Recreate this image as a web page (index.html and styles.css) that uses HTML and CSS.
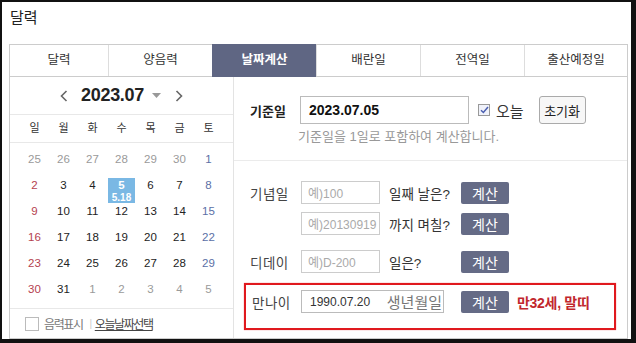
FILE: index.html
```html
<!DOCTYPE html>
<html>
  <head>
    <meta charset="utf-8">
    <title>달력</title>
    <link rel="stylesheet" href="styles.css">
  </head>
  <body>
    <div class="frame">
      <h2 class="title">달력</h2>
      <ul class="tabs">
        <li class="tab">달력</li>
        <li class="tab">양음력</li>
        <li class="tab active">날짜계산</li>
        <li class="tab">배란일</li>
        <li class="tab">전역일</li>
        <li class="tab">출산예정일</li>
      </ul>
      <div class="content">
        <!-- left: month calendar -->
        <div class="cal">
          <div class="cal-head">
            <svg class="arrow" width="8" height="12" viewBox="0 0 8 12"><path d="M6.5 1 L1.5 6 L6.5 11" fill="none" stroke="#666" stroke-width="1.6"/></svg>
            <span class="cal-month">2023.07</span>
            <svg class="caret" width="9" height="5" viewBox="0 0 9 5"><path d="M0 0 H9 L4.5 5 Z" fill="#999"/></svg>
            <svg class="arrow" width="8" height="12" viewBox="0 0 8 12"><path d="M1.5 1 L6.5 6 L1.5 11" fill="none" stroke="#666" stroke-width="1.6"/></svg>
          </div>
          <div class="cal-week">
            <span>일</span><span>월</span><span>화</span><span>수</span><span>목</span><span>금</span><span>토</span>
          </div>
          <div class="cal-grid">
            <div class="day other"><span class="num">25</span></div>
            <div class="day other"><span class="num">26</span></div>
            <div class="day other"><span class="num">27</span></div>
            <div class="day other"><span class="num">28</span></div>
            <div class="day other"><span class="num">29</span></div>
            <div class="day other"><span class="num">30</span></div>
            <div class="day sat"><span class="num">1</span></div>

            <div class="day sun"><span class="num">2</span></div>
            <div class="day"><span class="num">3</span></div>
            <div class="day"><span class="num">4</span></div>
            <div class="day today"><span class="num">5</span><span class="lunar">5.18</span></div>
            <div class="day"><span class="num">6</span></div>
            <div class="day"><span class="num">7</span></div>
            <div class="day sat"><span class="num">8</span></div>

            <div class="day sun"><span class="num">9</span></div>
            <div class="day"><span class="num">10</span></div>
            <div class="day"><span class="num">11</span></div>
            <div class="day"><span class="num">12</span></div>
            <div class="day"><span class="num">13</span></div>
            <div class="day"><span class="num">14</span></div>
            <div class="day sat"><span class="num">15</span></div>

            <div class="day sun"><span class="num">16</span></div>
            <div class="day"><span class="num">17</span></div>
            <div class="day"><span class="num">18</span></div>
            <div class="day"><span class="num">19</span></div>
            <div class="day"><span class="num">20</span></div>
            <div class="day"><span class="num">21</span></div>
            <div class="day sat"><span class="num">22</span></div>

            <div class="day sun"><span class="num">23</span></div>
            <div class="day"><span class="num">24</span></div>
            <div class="day"><span class="num">25</span></div>
            <div class="day"><span class="num">26</span></div>
            <div class="day"><span class="num">27</span></div>
            <div class="day"><span class="num">28</span></div>
            <div class="day sat"><span class="num">29</span></div>

            <div class="day sun"><span class="num">30</span></div>
            <div class="day"><span class="num">31</span></div>
            <div class="day other"><span class="num">1</span></div>
            <div class="day other"><span class="num">2</span></div>
            <div class="day other"><span class="num">3</span></div>
            <div class="day other"><span class="num">4</span></div>
            <div class="day other"><span class="num">5</span></div>
          </div>
          <div class="cal-foot">
            <span class="box"></span>
            <span class="foot-text">음력표시</span>
            <span class="bar">|</span>
            <a class="foot-link">오늘날짜선택</a>
          </div>
        </div>

        <!-- right: date calculator -->
        <div class="calc">
          <div class="base">
            <div class="base-row">
              <span class="base-label">기준일</span>
              <div class="field base-field">2023.07.05</div>
              <span class="check">
                <svg width="9" height="8" viewBox="0 0 9 8"><path d="M1 4.2 L3.4 6.5 L8 1" fill="none" stroke="#4b5fb0" stroke-width="1.5"/></svg>
              </span>
              <span class="today-text">오늘</span>
              <button class="reset">초기화</button>
            </div>
            <p class="hint">기준일을 1일로 포함하여 계산합니다.</p>
          </div>
          <div class="rows">
            <div class="row">
              <span class="label">기념일</span>
              <div class="field small ph">예)100</div>
              <span class="ask">일째 날은?</span>
              <button class="go">계산</button>
            </div>
            <div class="row second">
              <span class="label"></span>
              <div class="field small ph">예)20130919</div>
              <span class="ask">까지 며칠?</span>
              <button class="go">계산</button>
            </div>
            <div class="row third">
              <span class="label">디데이</span>
              <div class="field small ph">예)D-200</div>
              <span class="ask">일은?</span>
              <button class="go">계산</button>
            </div>
            <div class="age">
              <div class="row">
                <span class="label age-label">만나이</span>
                <div class="field birth">
                  <span class="birth-value">1990.07.20</span>
                  <span class="birth-hint">생년월일</span>
                </div>
                <button class="go age-go">계산</button>
                <span class="result">만32세, 말띠</span>
              </div>
            </div>
          </div>
        </div>
      </div>
    </div>
  </body>
</html>
```

FILE: styles.css
```css
body {
  margin: 0;
  background: #fff;
  color: #222;
  font-family: "Liberation Sans", "Noto Sans CJK KR", sans-serif;
}

.frame {
  box-sizing: border-box;
  width: 636px;
  height: 343px;
  border-style: solid;
  border-color: #111;
  border-width: 2px 5px 4px 2px;
  padding: 0 3px 0 7px;
}

.title {
  height: 42px;
  margin: 0;
  padding-left: 1px;
  font-size: 15px;
  font-weight: normal;
  line-height: 32px;
  color: #222;
}

.tabs {
  box-sizing: border-box;
  display: grid;
  grid-template-columns: 98px repeat(4, 104px) 1fr;
  height: 33px;
  margin: 0;
  padding: 0;
  list-style: none;
  border: 1px solid #ccc;
}

.tab {
  border-left: 1px solid #ddd;
  font-size: 12.5px;
  line-height: 31px;
  text-align: center;
  color: #333;
}

.tab:first-child {
  border-left: none;
}

.tab.active {
  margin: -1px 0;
  border-left-color: #5f6683;
  background: #5f6683;
  color: #fff;
  font-weight: bold;
  line-height: 33px;
}

.content {
  box-sizing: border-box;
  display: flex;
  height: 262px;
  border: 1px solid #ccc;
  border-top: none;
}

/* calendar */

.cal {
  box-sizing: border-box;
  width: 224px;
  border-right: 1px solid #e3e3e3;
}

.cal-head {
  display: flex;
  align-items: center;
  justify-content: center;
  height: 37px;
  border-bottom: 1px solid #e8e8e8;
}

.cal-month {
  margin: 0 8px 0 13px;
  font-size: 18px;
  font-weight: bold;
  letter-spacing: -0.3px;
  color: #222;
}

.caret {
  margin-right: 14px;
}

.cal-week {
  display: grid;
  grid-template-columns: repeat(7, 29px);
  height: 27px;
  padding-left: 10px;
  border-bottom: 1px solid #e8e8e8;
  font-size: 11px;
  line-height: 27px;
  text-align: center;
  color: #333;
}

.cal-grid {
  display: grid;
  grid-template-columns: repeat(7, 29px);
  grid-auto-rows: 26px;
  padding: 9px 0 0 10px;
  font-size: 11.5px;
  text-align: center;
  color: #222;
}

.day .num {
  display: block;
  line-height: 14px;
}

.day.other {
  color: #9a9a9a;
}

.day.sun {
  color: #b5424f;
}

.day.sat {
  color: #5b6fa6;
}

.day.today {
  margin: 0 1px 1px;
  background: #7ab8e4;
  color: #fff;
  font-weight: bold;
}

.day .lunar {
  display: block;
  font-size: 10px;
  line-height: 11px;
}

.cal-foot {
  display: flex;
  align-items: center;
  height: 29px;
  padding-left: 15px;
  border-top: 1px solid #e8e8e8;
  font-size: 12px;
  letter-spacing: -1.4px;
}

.box {
  box-sizing: border-box;
  width: 14px;
  height: 14px;
  border: 1px solid #bbb;
}

.foot-text {
  margin-left: 5px;
  color: #777;
}

.bar {
  margin: 0 4px 0 7px;
  font-size: 10px;
  color: #ccc;
}

.foot-link {
  color: #444;
  text-decoration: underline;
}

/* calculator */

.calc {
  flex: 1;
}

.base {
  box-sizing: border-box;
  height: 84px;
  padding: 19px 0 0 16px;
  border-bottom: 1px solid #ebebeb;
}

.base-row {
  display: flex;
  align-items: center;
  height: 28px;
}

.base-label {
  width: 50px;
  font-size: 13px;
  font-weight: bold;
  color: #222;
}

.field {
  box-sizing: border-box;
  display: flex;
  align-items: center;
  border: 1px solid #bbb;
  background: #fff;
}

.base-field {
  width: 169px;
  height: 28px;
  padding-left: 8px;
  font-size: 14px;
  font-weight: bold;
  color: #111;
}

.check {
  box-sizing: border-box;
  display: flex;
  align-items: center;
  justify-content: center;
  width: 12px;
  height: 12px;
  margin-left: 9px;
  border: 1px solid #999;
  background: #f0f2fa;
}

.today-text {
  margin-left: 6px;
  font-size: 15px;
  color: #333;
}

.reset {
  box-sizing: border-box;
  width: 47px;
  height: 28px;
  margin-left: 15px;
  padding: 0;
  border: 1px solid #aaa;
  border-radius: 3px;
  background: #f7f7f7;
  font-family: "Liberation Sans", "Noto Sans CJK KR", sans-serif;
  font-size: 13px;
  color: #222;
}

.hint {
  margin: 4px 0 0 48px;
  font-size: 13px;
  line-height: 18px;
  color: #999;
}

.rows {
  padding: 20px 0 0 16px;
}

.row {
  display: flex;
  align-items: center;
  height: 23px;
}

.row.second {
  margin-top: 8px;
}

.row.third {
  margin-top: 15px;
}

.label {
  width: 51px;
  font-size: 13.5px;
  letter-spacing: 0.5px;
  color: #444;
}

.field.small {
  width: 79px;
  height: 23px;
  padding-left: 6px;
  border-color: #ccc;
  font-size: 12px;
}

.ph {
  color: #aaa;
}

.ask {
  width: 72px;
  margin-left: 9px;
  font-size: 13.5px;
  color: #333;
  white-space: nowrap;
}

.go {
  width: 48px;
  height: 22px;
  padding: 0;
  border: none;
  border-radius: 2px;
  background: #656b86;
  font-family: "Liberation Sans", "Noto Sans CJK KR", sans-serif;
  font-size: 14px;
  color: #fff;
}

.age {
  box-sizing: border-box;
  width: 372px;
  height: 47px;
  margin: 10px 0 0 -6px;
  padding: 5px 0 0 6px;
  border: 2px solid #e0191e;
  box-shadow: 0 0 1px rgba(224, 25, 30, 0.6);
}

.label.age-label {
  width: 49px;
}

.field.birth {
  width: 143px;
  height: 23px;
  padding: 0 1px 0 8px;
  border-color: #bbb;
}

.birth-value {
  font-size: 12px;
  color: #333;
}

.birth-hint {
  margin-left: auto;
  font-size: 15px;
  color: #777;
}

.age-go {
  margin-left: 17px;
}

.result {
  margin-left: 8px;
  font-size: 14px;
  font-weight: bold;
  letter-spacing: -0.3px;
  color: #c1272d;
}
```
